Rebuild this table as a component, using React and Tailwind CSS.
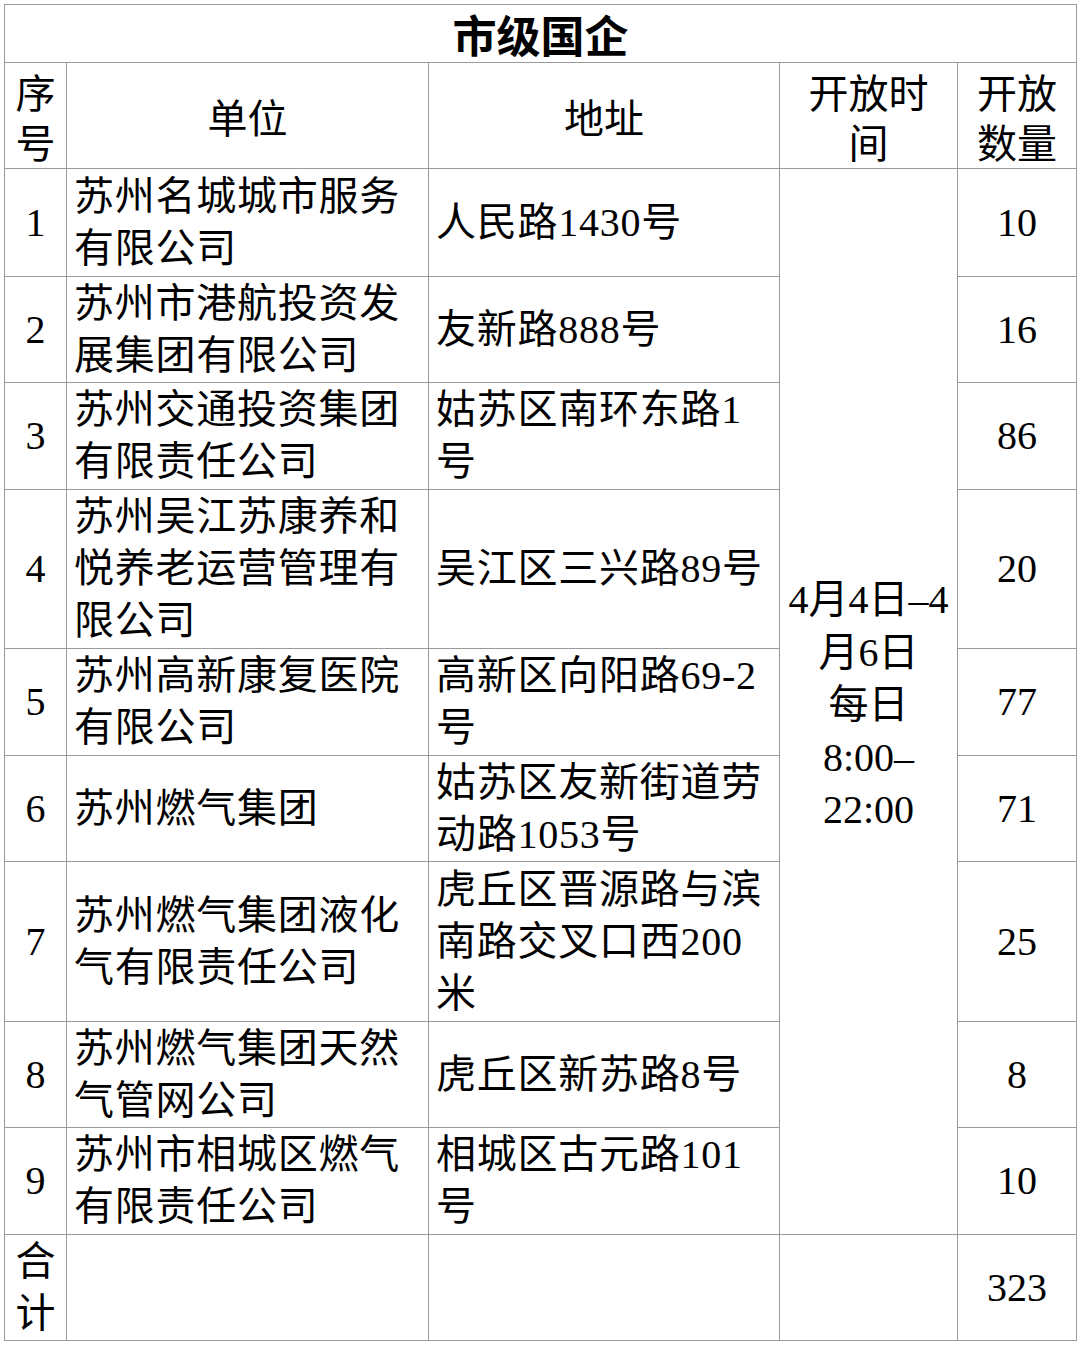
import React from 'react'

const rows = [
  { no: '1', unit: '苏州名城城市服务有限公司', addr: '人民路1430号', count: '10', h: 'h-[108px]' },
  { no: '2', unit: '苏州市港航投资发展集团有限公司', addr: '友新路888号', count: '16', h: 'h-[106px]' },
  { no: '3', unit: '苏州交通投资集团有限责任公司', addr: '姑苏区南环东路1号', count: '86', h: 'h-[107px]' },
  { no: '4', unit: '苏州吴江苏康养和悦养老运营管理有限公司', addr: '吴江区三兴路89号', count: '20', h: 'h-[159px]' },
  { no: '5', unit: '苏州高新康复医院有限公司', addr: '高新区向阳路69-2号', count: '77', h: 'h-[107px]' },
  { no: '6', unit: '苏州燃气集团', addr: '姑苏区友新街道劳动路1053号', count: '71', h: 'h-[106px]' },
  { no: '7', unit: '苏州燃气集团液化气有限责任公司', addr: '虎丘区晋源路与滨南路交叉口西200米', count: '25', h: 'h-[160px]' },
  { no: '8', unit: '苏州燃气集团天然气管网公司', addr: '虎丘区新苏路8号', count: '8', h: 'h-[106px]' },
  { no: '9', unit: '苏州市相城区燃气有限责任公司', addr: '相城区古元路101号', count: '10', h: 'h-[107px]' },
]

const serif = "font-['Liberation_Serif','Noto_Sans_CJK_SC',serif]"
const sans = "font-['Noto_Sans_CJK_SC',sans-serif]"
const cell = 'border border-[#9a9a9a] align-middle p-0'
const head = `${cell} ${sans} text-center text-[40px] leading-[50px] font-normal`
const body = `${cell} ${serif} text-[40px] leading-[52px]`

export default function App() {
  return (
    <div className="bg-white w-[1080px] h-[1345px] pt-[4px] pl-[4px]">
      <table className="table-fixed border-collapse w-[1072px] text-black">
        <colgroup>
          <col className="w-[62px]" />
          <col className="w-[362px]" />
          <col className="w-[351px]" />
          <col className="w-[178px]" />
          <col className="w-[119px]" />
        </colgroup>
        <tbody>
          <tr className="h-[58px]">
            <td colSpan={5} className={`${cell} ${sans} text-center text-[44px] leading-[50px] font-bold`}>
              市级国企
            </td>
          </tr>
          <tr className="h-[106px]">
            <td className={head}>序号</td>
            <td className={head}>单位</td>
            <td className={head}>地址</td>
            <td className={head}>
              开放时<br />间
            </td>
            <td className={head}>
              开放<br />数量
            </td>
          </tr>
          {rows.map((r, i) => (
            <tr key={r.no} className={r.h}>
              <td className={`${body} text-center`}>{r.no}</td>
              <td className={`${body} px-[7px] tracking-[0.75px]`}>{r.unit}</td>
              <td className={`${body} px-[7px] tracking-[0.75px]`}>{r.addr}</td>
              {i === 0 && (
                <td rowSpan={9} className={`${cell} ${serif} text-center text-[40px] leading-[52.5px]`}>
                  <div className="flex flex-col items-center pt-[8px]">
                    <span>4月4日–4</span>
                    <span>月6日</span>
                    <span>每日</span>
                    <span>8:00–</span>
                    <span>22:00</span>
                  </div>
                </td>
              )}
              <td className={`${body} text-center`}>{r.count}</td>
            </tr>
          ))}
          <tr className="h-[106px]">
            <td className={`${body} text-center`}>合<br />计</td>
            <td className={cell}></td>
            <td className={cell}></td>
            <td className={cell}></td>
            <td className={`${body} text-center`}>323</td>
          </tr>
        </tbody>
      </table>
    </div>
  )
}
